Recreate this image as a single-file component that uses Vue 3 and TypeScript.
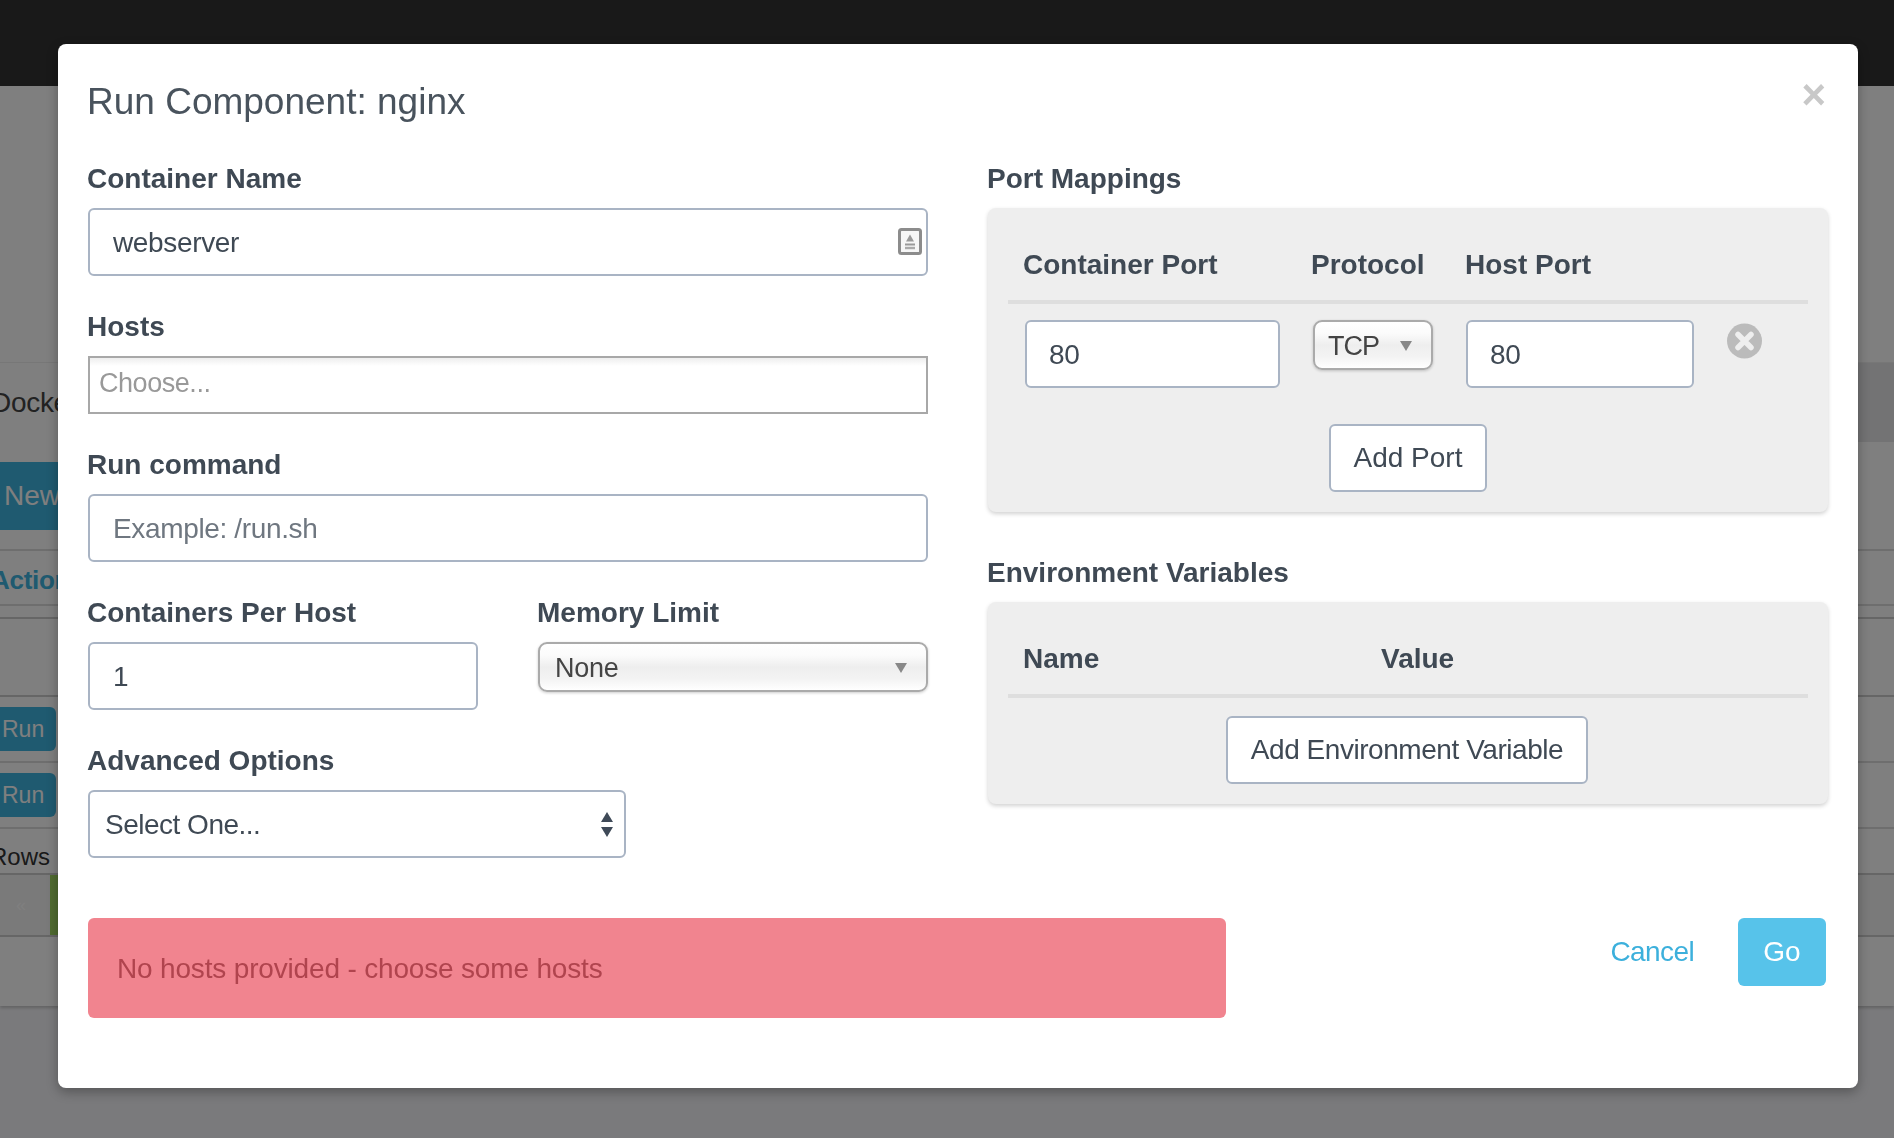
<template>
  <div class="page">
    <header class="navbar"></header>
    <main class="content">
      <div class="panel-head">
        <span class="panel-title">Docker Containers</span>
        <span class="panel-tools"></span>
      </div>
      <div class="toolbar"><button class="btn-new">New Container</button></div>
      <div class="table-head">Actions</div>
      <div class="table-blank"></div>
      <div v-for="n in 2" :key="n" class="table-row"><button class="btn-run">Run</button></div>
      <div class="table-foot"><span>Rows</span></div>
      <div class="pager"><span class="pager-prev">«</span><span class="pager-active"></span></div>
    </main>
  </div>

  <div class="backdrop"></div>

  <section class="modal">
    <button class="close">×</button>
    <h4 class="title">Run Component: {{ component }}</h4>

    <div class="columns">
      <div class="left">
        <div class="field">
          <label>Container Name</label>
          <div class="with-icon">
            <input v-model="containerName" class="input" type="text" />
            <svg class="card-icon" width="24" height="27" viewBox="0 0 24 27">
              <rect x="1.5" y="1.5" width="21" height="24" rx="2" fill="#f6f6f6" stroke="#8c8c8c" stroke-width="3" />
              <path d="M12 6.5l2 3.5 2 3.5H8l2-3.5z" fill="#999" />
              <path d="M7 16.5h10" stroke="#999" stroke-width="2" />
              <path d="M7 20h10" stroke="#aaa" stroke-width="2.4" />
            </svg>
          </div>
        </div>
        <div class="field">
          <label>Hosts</label>
          <div class="chosen"><input class="chosen-input" type="text" placeholder="Choose..." /></div>
        </div>
        <div class="field">
          <label>Run command</label>
          <input v-model="runCommand" class="input" type="text" placeholder="Example: /run.sh" />
        </div>
        <div class="split">
          <div class="field">
            <label>Containers Per Host</label>
            <input v-model="perHost" class="input" type="text" />
          </div>
          <div class="field">
            <label>Memory Limit</label>
            <div class="select-wrap">
              <select v-model="memory" class="select-mac">
                <option>None</option>
                <option>512 MB</option>
                <option>1 GB</option>
              </select>
            </div>
          </div>
        </div>
        <div class="field last">
          <label>Advanced Options</label>
          <div class="select-bs">
            <select v-model="advanced" class="select-plain">
              <option>Select One...</option>
              <option>Restart Policy</option>
            </select>
          </div>
        </div>
      </div>

      <div class="right">
        <div class="group">
          <label>Port Mappings</label>
          <div class="well">
            <div class="well-head port-head">
              <span>Container Port</span>
              <span>Protocol</span>
              <span>Host Port</span>
            </div>
            <div v-for="port in ports" :key="port.id" class="port-row">
              <input v-model="port.container" class="input" type="text" />
              <div class="select-wrap tcp">
                <select v-model="port.protocol" class="select-mac">
                  <option>TCP</option>
                  <option>UDP</option>
                </select>
              </div>
              <input v-model="port.host" class="input" type="text" />
              <svg class="remove" width="35" height="36" viewBox="0 0 35 36">
                <circle cx="17.5" cy="18" r="17.5" fill="#bbb" />
                <path d="M11 11.5l13 13M24 11.5l-13 13" stroke="#eee" stroke-width="5.5" stroke-linecap="round" />
              </svg>
            </div>
            <div class="well-action port-action"><button class="btn btn-port">Add Port</button></div>
          </div>
        </div>
        <div class="group env">
          <label>Environment Variables</label>
          <div class="well">
            <div class="well-head env-head">
              <span>Name</span>
              <span>Value</span>
            </div>
            <div class="well-action env-action"><button class="btn btn-env">Add Environment Variable</button></div>
          </div>
        </div>
      </div>
    </div>

    <footer class="footer">
      <div class="alert">{{ error }}</div>
      <div class="actions">
        <a class="cancel">Cancel</a>
        <button class="go">Go</button>
      </div>
    </footer>
  </section>
</template>

<script setup lang="ts">
import { ref } from 'vue'

interface Port {
  id: number
  container: string
  protocol: string
  host: string
}

const component = ref('nginx')
const containerName = ref('webserver')
const runCommand = ref('')
const perHost = ref('1')
const memory = ref('None')
const advanced = ref('Select One...')
const error = ref('No hosts provided - choose some hosts')
const ports = ref<Port[]>([{ id: 1, container: '80', protocol: 'TCP', host: '80' }])
</script>

<style>
html,
body {
  margin: 0;
  height: 1138px;
  overflow: hidden;
}
</style>

<style scoped>
* {
  box-sizing: border-box;
}

.page {
  height: 1138px;
  background: #f5f5f8;
  font-family: "Liberation Sans", Arial, sans-serif;
  color: #3f4954;
  font-size: 28px;
}

/* page behind the dialog, only its edges are visible */
.navbar {
  height: 86px;
  background: #333;
}

.content {
  height: 920px;
  padding-top: 276px;
  background: #fff;
  box-shadow: 0 2px 3px rgba(0, 0, 0, 0.2);
}

.panel-head {
  height: 80px;
  display: flex;
  justify-content: space-between;
  align-items: center;
  border-top: 1px solid #eee;
}

.panel-title {
  margin-left: -9px;
  color: #444;
  letter-spacing: -0.3px;
}

.panel-tools {
  width: 100px;
  height: 100%;
  background: #e6e6e8;
}

.toolbar {
  height: 109px;
  padding-top: 20px;
  border-bottom: 2px solid #ddd;
}

.btn-new,
.btn-run {
  border: 0;
  background: #3eb4e0;
  color: #fff;
  font: inherit;
  text-align: left;
  padding: 0 0 0 4px;
}

.btn-new {
  display: block;
  width: 200px;
  height: 68px;
}

.table-head {
  height: 55px;
  line-height: 58px;
  margin-left: -9px;
  font-weight: bold;
  font-size: 26px;
  letter-spacing: -0.3px;
  color: #3eb4e0;
  border-bottom: 2px solid #ddd;
}

.table-blank {
  height: 80px;
  margin-top: 11px;
  border-top: 2px solid #ccc;
  border-bottom: 2px solid #ccc;
}

.table-row {
  height: 66px;
  padding-top: 10px;
  border-bottom: 2px solid #ddd;
}

.btn-run {
  display: block;
  width: 56px;
  height: 44px;
  font-size: 23px;
  border-radius: 0 6px 6px 0;
  padding-left: 2px;
}

.table-foot {
  height: 44px;
  line-height: 56px;
  margin-left: -10px;
  color: #333;
  font-size: 24px;
}

.pager {
  height: 64px;
  display: flex;
  border-top: 2px solid #ccc;
  border-bottom: 2px solid #ccc;
  margin-bottom: 8px;
  background: #f4f4f4;
}

.pager-prev {
  width: 50px;
  padding-left: 16px;
  color: #fff;
  font-size: 18px;
  line-height: 60px;
}

.pager-active {
  width: 200px;
  background: #a0d660;
}

.backdrop {
  position: fixed;
  inset: 0;
  background: rgba(0, 0, 0, 0.5);
}

/* dialog */
.modal {
  position: absolute;
  left: 58px;
  top: 44px;
  width: 1800px;
  height: 1044px;
  padding: 38px 30px 0;
  background: #fff;
  border-radius: 8px;
  box-shadow: 0 4px 12px rgba(0, 0, 0, 0.3);
  font-family: "Liberation Sans", Arial, sans-serif;
  font-size: 28px;
  color: #3f4954;
}

.close {
  position: absolute;
  top: 27px;
  right: 32px;
  padding: 0;
  border: 0;
  background: none;
  color: #c8c8c8;
  font: bold 42px/48px "Liberation Sans", Arial, sans-serif;
}

.title {
  margin: 0 0 36px -1px;
  font-size: 37px;
  line-height: 40px;
  font-weight: normal;
  color: #49535d;
}

.columns {
  display: grid;
  grid-template-columns: 840px 840px;
  column-gap: 60px;
}

label {
  display: block;
  height: 40px;
  line-height: 42px;
  margin: 0 0 10px -1px;
  font-weight: bold;
  color: #3f4954;
}

.field {
  margin-bottom: 30px;
}

.field.last {
  margin-bottom: 0;
}

.input {
  display: block;
  width: 100%;
  height: 68px;
  padding: 1px 23px 0;
  border: 2px solid #a9b4c4;
  border-radius: 6px;
  background: #fff;
  font: 28px "Liberation Sans", Arial, sans-serif;
  letter-spacing: -0.35px;
  color: #3f4954;
  outline: none;
}

.input::placeholder {
  color: #6f7780;
  opacity: 1;
}

.with-icon {
  position: relative;
}

.card-icon {
  position: absolute;
  top: 20px;
  right: 6px;
}

.chosen {
  height: 58px;
  border: 2px solid #a8a8a8;
  background: linear-gradient(#eee, #fff 8px);
}

.chosen-input {
  width: 100%;
  height: 100%;
  padding: 0 9px 4px;
  border: 0;
  background: none;
  outline: none;
  font: 27px "Liberation Sans", Arial, sans-serif;
  letter-spacing: -0.45px;
}

.chosen-input::placeholder {
  color: #999;
  opacity: 1;
}

.split {
  display: grid;
  grid-template-columns: 390px 390px;
  column-gap: 60px;
}

.select-wrap {
  position: relative;
}

.select-wrap::after {
  content: "";
  position: absolute;
  top: 21px;
  right: 21px;
  border-style: solid;
  border-width: 10px 6px 0;
  border-color: #888 transparent transparent;
  pointer-events: none;
}

.select-mac {
  display: block;
  width: 100%;
  height: 50px;
  padding: 2px 0 0 15px;
  appearance: none;
  border: 2px solid #aaa;
  border-radius: 9px;
  background: linear-gradient(#fff, #fbfbfb 25%, #eee 50%, #f3f3f3 75%, #fff);
  box-shadow: 0 1px 3px rgba(0, 0, 0, 0.2);
  font: 27px "Liberation Sans", Arial, sans-serif;
  letter-spacing: -0.3px;
  color: #444;
  outline: none;
}

.tcp {
  width: 120px;
  align-self: start;
}

.tcp .select-mac {
  height: 50px;
  padding-left: 13px;
  letter-spacing: -1px;
}

.select-bs {
  position: relative;
  width: 538px;
}

.select-bs::before,
.select-bs::after {
  content: "";
  position: absolute;
  right: 13px;
  border-style: solid;
  pointer-events: none;
}

.select-bs::before {
  top: 22px;
  border-width: 0 6.5px 10px;
  border-color: transparent transparent #3f4a58;
}

.select-bs::after {
  top: 37px;
  border-width: 10px 6.5px 0;
  border-color: #3f4a58 transparent transparent;
}

.select-plain {
  display: block;
  width: 100%;
  height: 68px;
  padding: 0 0 0 15px;
  appearance: none;
  border: 2px solid #a9b4c4;
  border-radius: 6px;
  background: #fff;
  font: 28px "Liberation Sans", Arial, sans-serif;
  letter-spacing: -0.5px;
  color: #3f4954;
  outline: none;
}

.right label {
  margin-left: -1px;
}

.env {
  margin-top: 40px;
}

.well {
  padding: 36px 20px 20px 20px;
  background: #eee;
  border-radius: 8px;
  box-shadow: 0 2px 4px rgba(0, 0, 0, 0.18);
}

.well-head {
  display: grid;
  box-sizing: content-box;
  height: 40px;
  padding-left: 15px;
  padding-bottom: 16px;
  line-height: 40px;
  border-bottom: 4px solid #dedede;
  font-weight: bold;
}

.port-head {
  grid-template-columns: 288px 154px 1fr;
  line-height: 42px;
}

.env-head {
  grid-template-columns: 358px 1fr;
  padding-bottom: 15px;
  margin-top: 1px;
}

.port-row {
  display: grid;
  grid-template-columns: 255px 120px 228px 35px;
  justify-content: start;
  column-gap: 33px;
  margin-top: 16px;
  padding-left: 17px;
}

.port-row .input {
  padding: 1px 22px 0;
}

.remove {
  margin-top: 3px;
}

.well-action {
  display: flex;
  justify-content: center;
}

.port-action {
  margin-top: 36px;
}

.env-action {
  margin-top: 18px;
}

.btn {
  height: 68px;
  padding: 0;
  border: 2px solid #a9b4c4;
  border-radius: 6px;
  background: #fff;
  font: 28px "Liberation Sans", Arial, sans-serif;
  color: #3f4954;
}

.btn-port {
  width: 158px;
}

.btn-env {
  width: 362px;
  margin-right: 2px;
  letter-spacing: -0.45px;
}

.footer {
  display: flex;
  justify-content: space-between;
  align-items: flex-start;
  margin-top: 60px;
}

.alert {
  width: 1138px;
  height: 100px;
  padding-left: 29px;
  line-height: 102px;
  background: #f1848f;
  border-radius: 6px;
  letter-spacing: -0.17px;
  color: #b0444e;
}

.actions {
  display: flex;
  align-items: center;
  gap: 44px;
  margin-right: 2px;
}

.cancel {
  color: #3cb0dc;
  letter-spacing: -0.6px;
}

.go {
  width: 88px;
  height: 68px;
  padding: 0;
  border: 0;
  border-radius: 6px;
  background: #57c3ea;
  color: #fff;
  font: 28px "Liberation Sans", Arial, sans-serif;
}
</style>
